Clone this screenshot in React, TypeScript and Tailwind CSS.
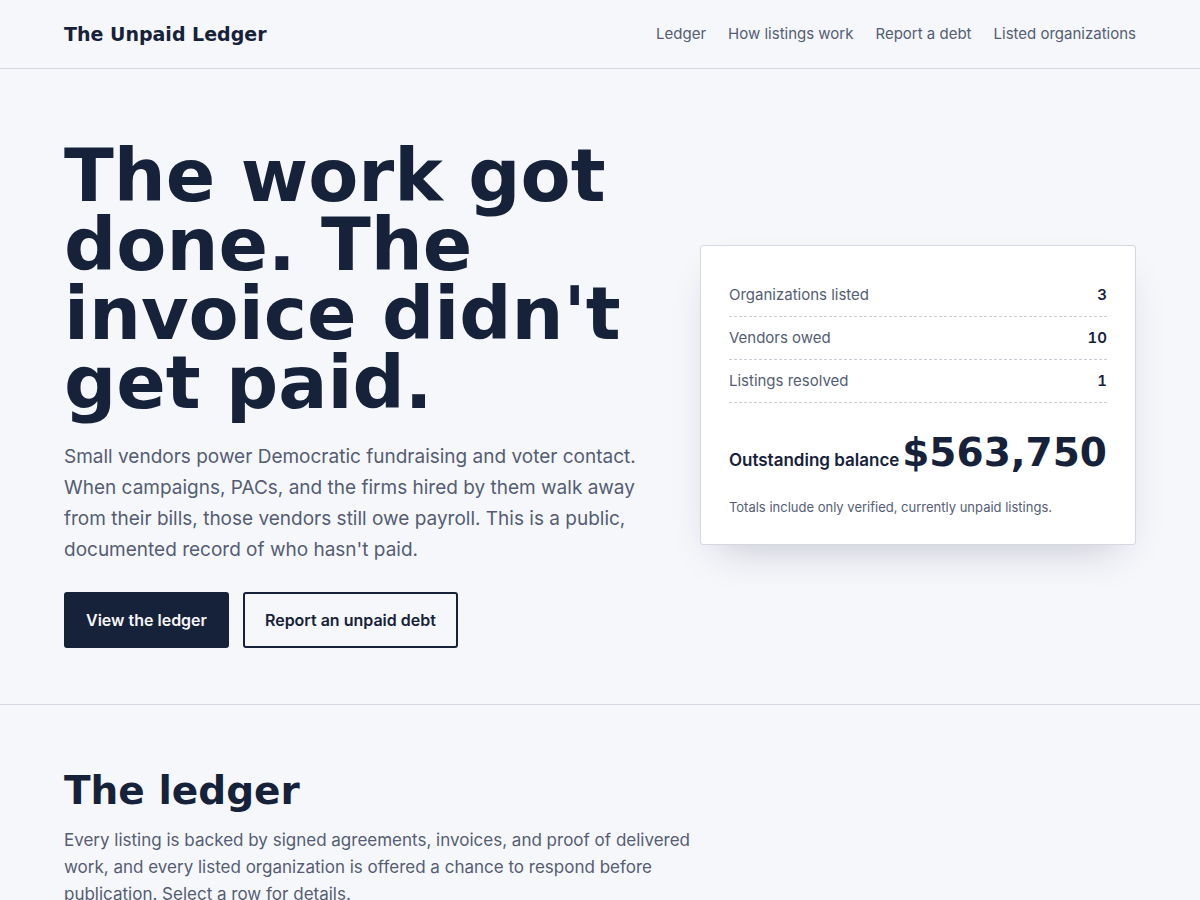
const navLinks = [
  { label: "Ledger", href: "#ledger" },
  { label: "How listings work", href: "#how" },
  { label: "Report a debt", href: "#report" },
  { label: "Listed organizations", href: "#organizations" }
]

const stats = [
  { label: "Organizations listed", value: "3" },
  { label: "Vendors owed", value: "10" },
  { label: "Listings resolved", value: "1" }
]

export default function App() {
  return (
    <div className="min-h-screen bg-[#f6f7fb] font-['Inter',sans-serif] text-[#16213a]">
      {/* Header */}
      <header className="border-b border-[#d5d8e0]">
        <div className="mx-auto flex max-w-[1200px] flex-wrap items-center justify-between gap-4 px-16 py-5">
          <a href="#top" className="font-['DejaVu_Sans',sans-serif] text-[19px] leading-7 font-bold">
            The Unpaid Ledger
          </a>
          <nav className="flex flex-wrap gap-[22px] text-[15px] leading-6 text-[#545d73]">
            {navLinks.map((link) => (
              <a key={link.href} href={link.href} className="hover:text-[#16213a]">
                {link.label}
              </a>
            ))}
          </nav>
        </div>
      </header>

      {/* Hero */}
      <section id="top" className="border-b border-[#d5d8e0]">
        <div className="mx-auto grid max-w-[1200px] items-center gap-14 px-16 pt-[72px] pb-14 md:grid-cols-[1.33fr_1fr]">
          <div>
            <h1 className="font-['DejaVu_Sans',sans-serif] text-[73px] leading-[69px] font-bold">
              The work got done. The invoice didn't get paid.
            </h1>
            <p className="mt-6 text-[19px] leading-[31px] text-[#545d73]">
              Small vendors power Democratic fundraising and voter contact. When campaigns, PACs,
              and the firms hired by them walk away from their bills, those vendors still owe
              payroll. This is a public, documented record of who hasn't paid.
            </p>
            <div className="mt-[27px] flex flex-wrap gap-[14px]">
              <button className="rounded-[3px] border-2 border-[#16213a] bg-[#16213a] px-5 py-[14px] text-[16px] leading-6 font-semibold text-[#f6f7fb]">
                View the ledger
              </button>
              <button className="rounded-[3px] border-2 border-[#16213a] px-5 py-[14px] text-[16px] leading-6 font-semibold">
                Report an unpaid debt
              </button>
            </div>
          </div>

          <aside className="rounded-[3px] border border-[#d5d8e0] bg-white p-7 shadow-[0_18px_40px_-18px_rgba(22,33,58,0.25)]">
            <dl>
              {stats.map((stat) => (
                <div
                  key={stat.label}
                  className="flex items-baseline justify-between border-b border-dashed border-[#cbced6] py-[9px] text-[15px] leading-6"
                >
                  <dt className="text-[#545d73]">{stat.label}</dt>
                  <dd className="font-semibold tabular-nums">{stat.value}</dd>
                </div>
              ))}
              <div className="flex items-baseline justify-between pt-5">
                <dt className="text-[17px] leading-7 font-semibold">Outstanding balance</dt>
                <dd className="font-['DejaVu_Sans',sans-serif] text-[39px] leading-[60px] font-bold">
                  $563,750
                </dd>
              </div>
            </dl>
            <p className="mt-4 text-[13px] leading-[17px] text-[#545d73]">
              Totals include only verified, currently unpaid listings.
            </p>
          </aside>
        </div>
      </section>

      {/* Ledger */}
      <section id="ledger">
        <div className="mx-auto max-w-[1200px] px-16 py-16">
          <h2 className="font-['DejaVu_Sans',sans-serif] text-[39px] leading-[44px] font-bold">
            The ledger
          </h2>
          <p className="mt-[14px] max-w-[640px] text-[17px] leading-[27px] text-[#545d73]">
            Every listing is backed by signed agreements, invoices, and proof of delivered work, and
            every listed organization is offered a chance to respond before publication. Select a
            row for details.
          </p>
        </div>
      </section>
    </div>
  )
}
